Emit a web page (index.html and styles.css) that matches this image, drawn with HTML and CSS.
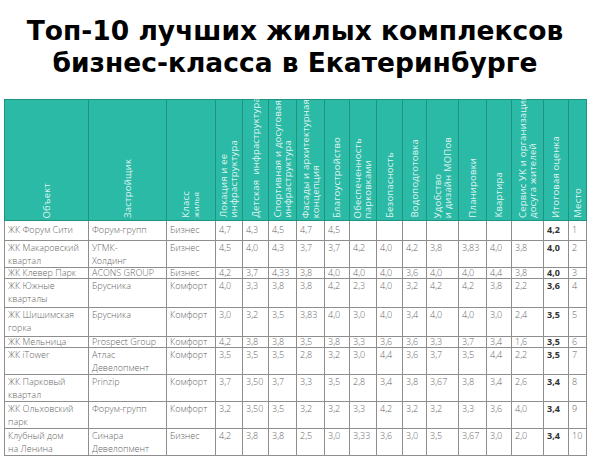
FILE: index.html
```html
<!DOCTYPE html>
<html lang="ru">
<head>
<meta charset="utf-8">
<title>Топ-10 ЖК бизнес-класса</title>
<link rel="stylesheet" href="styles.css">
</head>
<body>
<h1 class="title">Топ-10 лучших жилых комплексов<br>бизнес-класса в Екатеринбурге</h1>
<table class="rating">
<colgroup>
<col class="c1"><col class="c2"><col class="c3"><col class="c4"><col class="c5"><col class="c6"><col class="c7"><col class="c8"><col class="c9"><col class="c10"><col class="c11"><col class="c12"><col class="c13"><col class="c14"><col class="c15"><col class="c16"><col class="c17">
</colgroup>
<thead>
<tr>
<th><div class="hc"><div class="vt">Объект</div></div></th>
<th><div class="hc"><div class="vt">Застройщик</div></div></th>
<th><div class="hc"><div class="vt">Класс<br><span class="sm">жилья</span></div></div></th>
<th><div class="hc"><div class="vt">Локация и ее<br>инфраструктура</div></div></th>
<th><div class="hc"><div class="vt">Детская&nbsp; инфраструктура</div></div></th>
<th><div class="hc"><div class="vt">Спортивная и досуговая<br>инфраструктура</div></div></th>
<th><div class="hc"><div class="vt">Фасады и архитектурная<br>концепция</div></div></th>
<th><div class="hc"><div class="vt">Благоустройство</div></div></th>
<th><div class="hc"><div class="vt">Обеспеченность<br>парковками</div></div></th>
<th><div class="hc"><div class="vt">Безопасность</div></div></th>
<th><div class="hc"><div class="vt">Водоподготовка</div></div></th>
<th><div class="hc"><div class="vt">Удобство<br>и дизайн МОПов</div></div></th>
<th><div class="hc"><div class="vt">Планировки</div></div></th>
<th><div class="hc"><div class="vt">Квартира</div></div></th>
<th><div class="hc"><div class="vt">Сервис УК и организация<br>досуга жителей</div></div></th>
<th><div class="hc"><div class="vt">Итоговая оценка</div></div></th>
<th><div class="hc"><div class="vt">Место</div></div></th>
</tr>
</thead>
<tbody>
<tr class="r1">
<td>ЖК Форум Сити</td><td>Форум-групп</td><td>Бизнес</td><td>4,7</td><td>4,3</td><td>4,5</td><td>4,7</td><td>4,5</td><td></td><td></td><td></td><td></td><td></td><td></td><td></td><td class="b">4,2</td><td>1</td>
</tr>
<tr class="r2">
<td>ЖК Макаровский<br>квартал</td><td>УГМК-<br>Холдинг</td><td>Бизнес</td><td>4,5</td><td>4,0</td><td>4,3</td><td>3,7</td><td>3,7</td><td>4,2</td><td>4,0</td><td>4,2</td><td>3,8</td><td>3,83</td><td>4,0</td><td>3,8</td><td class="b">4,0</td><td>2</td>
</tr>
<tr class="r3">
<td>ЖК Клевер Парк</td><td>ACONS GROUP</td><td>Бизнес</td><td>4,2</td><td>3,7</td><td>4,33</td><td>3,8</td><td>4,0</td><td>4,0</td><td>4,0</td><td>3,6</td><td>4,0</td><td>4,0</td><td>4,4</td><td>3,8</td><td class="b">4,0</td><td>3</td>
</tr>
<tr class="r4">
<td>ЖК Южные<br>кварталы</td><td>Брусника</td><td>Комфорт</td><td>4,0</td><td>3,3</td><td>3,8</td><td>3,8</td><td>4,2</td><td>2,3</td><td>4,0</td><td>3,2</td><td>4,2</td><td>4,2</td><td>3,8</td><td>2,2</td><td class="b">3,6</td><td>4</td>
</tr>
<tr class="r5">
<td>ЖК Шишимская<br>горка</td><td>Брусника</td><td>Комфорт</td><td>3,0</td><td>3,2</td><td>3,5</td><td>3,83</td><td>4,0</td><td>3,0</td><td>4,0</td><td>3,4</td><td>4,0</td><td>4,0</td><td>3,0</td><td>2,4</td><td class="b">3,5</td><td>5</td>
</tr>
<tr class="r6">
<td>ЖК Мельница</td><td>Prospect Group</td><td>Комфорт</td><td>4,2</td><td>3,8</td><td>3,8</td><td>3,5</td><td>3,8</td><td>3,3</td><td>3,6</td><td>3,6</td><td>3,3</td><td>3,7</td><td>3,4</td><td>1,6</td><td class="b">3,5</td><td>6</td>
</tr>
<tr class="r7">
<td>ЖК iTower</td><td>Атлас<br>Девелопмент</td><td>Комфорт</td><td>3,5</td><td>3,5</td><td>3,5</td><td>2,8</td><td>3,2</td><td>3,0</td><td>4,4</td><td>3,6</td><td>3,7</td><td>3,5</td><td>4,4</td><td>2,2</td><td class="b">3,5</td><td>7</td>
</tr>
<tr class="r8">
<td>ЖК Парковый<br>квартал</td><td>Prinzip</td><td>Комфорт</td><td>3,7</td><td>3,50</td><td>3,7</td><td>3,3</td><td>3,5</td><td>2,8</td><td>3,4</td><td>3,8</td><td>3,67</td><td>3,8</td><td>3,4</td><td>2,6</td><td class="b">3,4</td><td>8</td>
</tr>
<tr class="r9">
<td>ЖК Ольховский<br>парк</td><td>Форум-групп</td><td>Комфорт</td><td>3,2</td><td>3,50</td><td>3,5</td><td>3,2</td><td>3,2</td><td>3,3</td><td>4,2</td><td>3,2</td><td>3,2</td><td>3,3</td><td>3,6</td><td>4,0</td><td class="b">3,4</td><td>9</td>
</tr>
<tr class="r10">
<td>Клубный дом<br>на Ленина</td><td>Синара<br>Девелопмент</td><td>Бизнес</td><td>4,2</td><td>3,8</td><td>3,8</td><td>2,5</td><td>3,0</td><td>3,33</td><td>3,6</td><td>3,0</td><td>3,5</td><td>3,67</td><td>3,0</td><td>2,0</td><td class="b">3,4</td><td>10</td>
</tr>
</tbody>
</table>
</body>
</html>
```
FILE: styles.css
```css
html, body {
  margin: 0;
  padding: 0;
  background: #ffffff;
}

body {
  width: 590px;
  height: 459px;
  overflow: hidden;
}

.title {
  margin: 15px 0 0;
  font-family: "DejaVu Sans", Verdana, sans-serif;
  font-weight: 700;
  font-size: 26.5px;
  line-height: 32px;
  color: #000;
  text-align: center;
  white-space: nowrap;
}

.rating {
  margin: 20px 0 0 4px;
  border-collapse: collapse;
  table-layout: fixed;
  width: 582px;
  font-family: "Open Sans", "DejaVu Sans", sans-serif;
  font-size: 9px;
  font-weight: 300;
  color: #666;
}

.c1 { width: 84px; }
.c2 { width: 78px; }
.c3 { width: 49px; }
.c4 { width: 27px; }
.c5 { width: 26px; }
.c6 { width: 28px; }
.c7 { width: 28px; }
.c8 { width: 25px; }
.c9 { width: 27px; }
.c10 { width: 26px; }
.c11 { width: 24px; }
.c12 { width: 32px; }
.c13 { width: 28px; }
.c14 { width: 25px; }
.c15 { width: 32px; }
.c16 { width: 25px; }
.c17 { width: 18px; }

.rating th {
  box-sizing: border-box;
  background: #2bbaa6;
  border: 1px solid #1e9381;
  padding: 0;
  height: 121px;
  vertical-align: bottom;
  font-weight: 400;
}

.hc {
  display: flex;
  justify-content: center;
  align-items: flex-end;
  height: 119px;
  padding-bottom: 2px;
  box-sizing: border-box;
}

.vt {
  writing-mode: vertical-rl;
  transform: rotate(180deg);
  white-space: nowrap;
  font-size: 9.5px;
  letter-spacing: 0.2px;
  line-height: 10px;
  color: rgba(255, 255, 255, 0.88);
  text-align: start;
}

.sm {
  font-size: 8px;
}

.rating td {
  box-sizing: border-box;
  border: 1px solid #8e8e8e;
  padding: 1px 0 0 3px;
  vertical-align: top;
  line-height: 12.5px;
  white-space: nowrap;
  overflow: hidden;
}

.rating td.b {
  font-weight: 700;
  color: #333;
}

.r1 td { height: 20px; padding-top: 3px; }
.r2 td { height: 27px; }
.r3 td { height: 11px; padding-top: 0; line-height: 10px; }
.r4 td { height: 29px; }
.r5 td { height: 29px; }
.r6 td { height: 11px; padding-top: 0; line-height: 10px; }
.r7 td { height: 27px; }
.r8 td { height: 27px; }
.r9 td { height: 25px; }
.r10 td { height: 27px; }
```
